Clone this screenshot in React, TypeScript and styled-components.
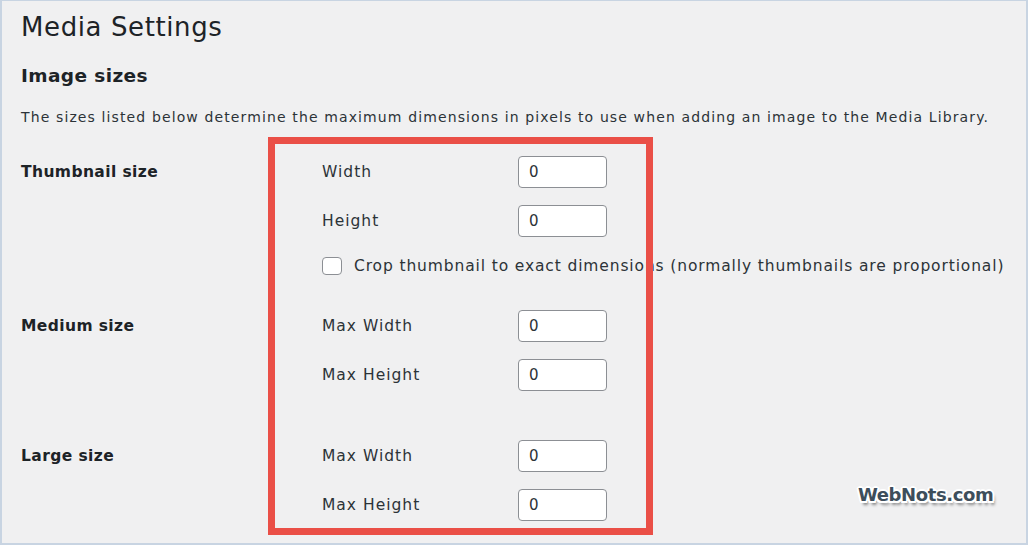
import styled, { createGlobalStyle } from "styled-components";

const GlobalStyle = createGlobalStyle`
  html, body {
    margin: 0;
    padding: 0;
    background: #f0f0f1;
  }
  * {
    box-sizing: border-box;
  }
`;

type SizeRow = { label: string; value: string };
type SizeGroup = { title: string; rows: SizeRow[]; crop?: boolean; spaceTop: number };

const groups: SizeGroup[] = [
  {
    title: "Thumbnail size",
    rows: [
      { label: "Width", value: "0" },
      { label: "Height", value: "0" },
    ],
    crop: true,
    spaceTop: 0,
  },
  {
    title: "Medium size",
    rows: [
      { label: "Max Width", value: "0" },
      { label: "Max Height", value: "0" },
    ],
    spaceTop: 35,
  },
  {
    title: "Large size",
    rows: [
      { label: "Max Width", value: "0" },
      { label: "Max Height", value: "0" },
    ],
    spaceTop: 49,
  },
];

function App() {
  return (
    <>
      <GlobalStyle />
      <Frame>
        <Title>Media Settings</Title>
        <SectionTitle>Image sizes</SectionTitle>
        <Description>
          The sizes listed below determine the maximum dimensions in pixels to use when adding an
          image to the Media Library.
        </Description>

        <SettingsTable>
          {groups.map((group) => (
            <GroupRow key={group.title} $spaceTop={group.spaceTop}>
              <GroupTitle>{group.title}</GroupTitle>
              <Fields>
                {group.rows.map((row) => (
                  <FieldRow key={row.label}>
                    <FieldLabel>{row.label}</FieldLabel>
                    <NumberInput type="text" defaultValue={row.value} readOnly />
                  </FieldRow>
                ))}
                {group.crop && (
                  <CheckRow>
                    <CheckBox type="checkbox" />
                    <CheckText>
                      Crop thumbnail to exact dimensions (normally thumbnails are proportional)
                    </CheckText>
                  </CheckRow>
                )}
              </Fields>
            </GroupRow>
          ))}
        </SettingsTable>

        <Highlight />
        <Watermark>WebNots.com</Watermark>
      </Frame>
    </>
  );
}

export default App;

const Frame = styled.div`
  position: relative;
  width: 1028px;
  height: 545px;
  overflow: hidden;
  border: 2px solid #c8d4e2;
  border-top-width: 1px;
  padding: 11px 0 0 19px;
  font-family: "DejaVu Sans", "Liberation Sans", sans-serif;
  color: #1d2327;
`;

const Title = styled.h1`
  margin: 0;
  font-size: 26px;
  font-weight: 400;
  line-height: 30px;
  letter-spacing: 0.6px;
  color: #1d2327;
`;

const SectionTitle = styled.h2`
  margin: 23px 0 0;
  font-size: 18.5px;
  font-weight: 700;
  line-height: 22px;
  letter-spacing: 0.4px;
  color: #1d2327;
`;

const Description = styled.p`
  margin: 21px 0 0;
  font-size: 14px;
  line-height: 18px;
  letter-spacing: 1.12px;
  color: #2c3338;
  white-space: nowrap;
`;

const SettingsTable = styled.div`
  display: flex;
  flex-direction: column;
  margin-top: 30px;
`;

const GroupRow = styled.div<{ $spaceTop: number }>`
  display: grid;
  grid-template-columns: 301px 1fr;
  margin-top: ${(p) => p.$spaceTop}px;
`;

const GroupTitle = styled.div`
  font-size: 15.5px;
  font-weight: 700;
  line-height: 32px;
  letter-spacing: 0.4px;
  color: #1d2327;
`;

const Fields = styled.div`
  display: flex;
  flex-direction: column;
  gap: 17px;
`;

const FieldRow = styled.div`
  display: flex;
  align-items: center;
  height: 32px;
`;

const FieldLabel = styled.div`
  width: 196px;
  font-size: 15.5px;
  letter-spacing: 1px;
  color: #2c3338;
`;

const NumberInput = styled.input`
  width: 89px;
  height: 32px;
  padding: 0 10px;
  border: 1px solid #8c8f94;
  border-radius: 4px;
  background: #ffffff;
  font-family: inherit;
  font-size: 15px;
  color: #2c3338;
  outline: none;
`;

const CheckRow = styled.div`
  display: flex;
  align-items: center;
  gap: 12px;
  height: 19px;
  margin-top: 2px;
`;

const CheckBox = styled.input`
  appearance: none;
  margin: 0;
  width: 20px;
  height: 18px;
  border: 1px solid #8c8f94;
  border-radius: 4px;
  background: #ffffff;
`;

const CheckText = styled.span`
  font-size: 15.5px;
  letter-spacing: 0.87px;
  color: #2c3338;
  white-space: nowrap;
`;

/* annotation drawn over the form */
const Highlight = styled.div`
  position: absolute;
  left: 266px;
  top: 136px;
  width: 385px;
  height: 398px;
  border: 7px solid #ea4f47;
  pointer-events: none;
`;

const Watermark = styled.div`
  position: absolute;
  left: 856px;
  top: 483px;
  font-family: "DejaVu Sans", "Liberation Sans", sans-serif;
  font-size: 18px;
  font-weight: 700;
  letter-spacing: -0.4px;
  color: #3d4e5b;
  text-shadow:
    -1.5px -1.5px 0 #fff,
    1.5px -1.5px 0 #fff,
    -1.5px 1.5px 0 #fff,
    1.5px 1.5px 0 #fff,
    0 -2px 0 #fff,
    0 2px 0 #fff,
    -2px 0 0 #fff,
    2px 0 0 #fff,
    2px 4px 3px rgba(0, 0, 0, 0.45);
`;
